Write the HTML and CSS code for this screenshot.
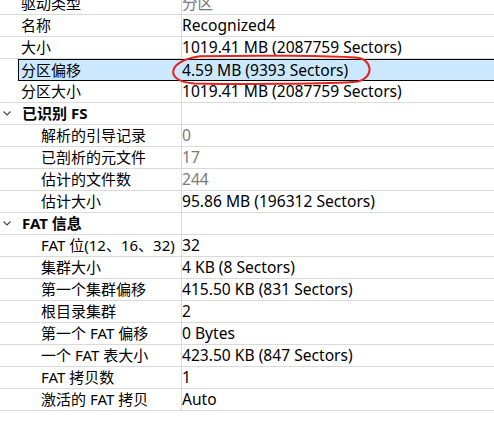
FILE: index.html
```html
<!DOCTYPE html>
<html lang="zh-CN">
<head>
<meta charset="utf-8">
<title>属性</title>
<link rel="stylesheet" href="styles.css">
</head>
<body>
<div class="grid">
  <div class="row"><div class="k">驱动类型</div><div class="v dim">分区</div></div>
  <div class="row"><div class="k">名称</div><div class="v">Recognized4</div></div>
  <div class="row"><div class="k">大小</div><div class="v">1019.41 MB (2087759 Sectors)</div></div>
  <div class="row sel"><div class="k">分区偏移</div><div class="v">4.59 MB (9393 Sectors)</div></div>
  <div class="row"><div class="k">分区大小</div><div class="v">1019.41 MB (2087759 Sectors)</div></div>
  <div class="row hdr"><div class="k"><svg class="chev" width="8" height="5" viewBox="0 0 8 5"><polyline points="0.5,0.5 4,4 7.5,0.5" fill="none" stroke="#444" stroke-width="1.1"/></svg>已识别 FS</div><div class="v"></div></div>
  <div class="row sub"><div class="k">解析的引导记录</div><div class="v dim">0</div></div>
  <div class="row sub"><div class="k">已剖析的元文件</div><div class="v dim">17</div></div>
  <div class="row sub"><div class="k">估计的文件数</div><div class="v dim">244</div></div>
  <div class="row sub"><div class="k">估计大小</div><div class="v">95.86 MB (196312 Sectors)</div></div>
  <div class="row hdr"><div class="k"><svg class="chev" width="8" height="5" viewBox="0 0 8 5"><polyline points="0.5,0.5 4,4 7.5,0.5" fill="none" stroke="#444" stroke-width="1.1"/></svg>FAT 信息</div><div class="v"></div></div>
  <div class="row sub"><div class="k">FAT 位(12、16、32)</div><div class="v">32</div></div>
  <div class="row sub"><div class="k">集群大小</div><div class="v">4 KB (8 Sectors)</div></div>
  <div class="row sub"><div class="k">第一个集群偏移</div><div class="v">415.50 KB (831 Sectors)</div></div>
  <div class="row sub"><div class="k">根目录集群</div><div class="v">2</div></div>
  <div class="row sub"><div class="k">第一个 FAT 偏移</div><div class="v">0 Bytes</div></div>
  <div class="row sub"><div class="k">一个 FAT 表大小</div><div class="v">423.50 KB (847 Sectors)</div></div>
  <div class="row sub"><div class="k">FAT 拷贝数</div><div class="v">1</div></div>
  <div class="row sub"><div class="k">激活的 FAT 拷贝</div><div class="v">Auto</div></div>
</div>
<svg class="mark" width="494" height="100" viewBox="0 0 494 100">
  <path d="M 200,56.3 C 260,55.2 330,55.8 356,57.6 C 373.5,59 374,78 358,81.4 C 330,84.2 240,84.4 194,83.4 C 165.5,82 165,61 200,56.3 Z" fill="none" stroke="#e3231c" stroke-width="2"/>
</svg>
</body>
</html>
```
FILE: styles.css
```css
html, body {
  margin: 0;
  padding: 0;
  background: #fff;
  overflow: hidden;
}
body {
  width: 494px;
  height: 448px;
  position: relative;
  font-family: "Noto Sans", "Noto Sans CJK SC", sans-serif;
  font-size: 15px;
  color: #000;
}
.grid {
  margin-top: -7px;
}
.row {
  display: grid;
  grid-template-columns: 182px 1fr;
  height: 22px;
  box-sizing: border-box;
  border-bottom: 1px solid #dadada;
  line-height: 21px;
  white-space: nowrap;
}
.k {
  box-sizing: border-box;
  border-right: 1px solid #dadada;
  padding-left: 21px;
  overflow: hidden;
}
.v {
  padding-left: 0;
  overflow: hidden;
  font-size: 15.6px;
}
.dim {
  color: #7a7a7a;
}
.sub .k {
  padding-left: 41px;
}
.hdr .k {
  padding-left: 3px;
  font-weight: bold;
  display: flex;
  align-items: center;
}
.chev {
  margin-right: 11px;
  flex: none;
}
.row.sel {
  margin-left: 18px;
  grid-template-columns: 163px 1fr;
  background: #cce8ff;
  border: 1px solid #000;
  border-right: none;
  line-height: 20px;
}
.sel .k {
  border-right: none;
  padding-left: 2px;
}
.mark {
  position: absolute;
  left: 0;
  top: 0;
  pointer-events: none;
}
```
